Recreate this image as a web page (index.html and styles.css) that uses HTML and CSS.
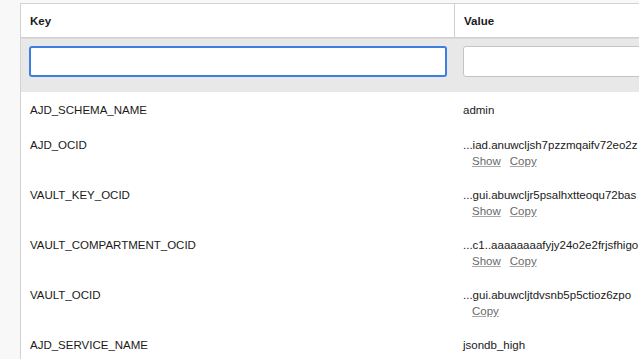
FILE: index.html
```html
<!DOCTYPE html>
<html>
<head>
<meta charset="utf-8">
<link rel="stylesheet" href="styles.css">
</head>
<body>
<div class="table">
  <div class="row head">
    <div class="cell key">Key</div>
    <div class="cell val divider">Value</div>
  </div>
  <div class="row filter">
    <div class="cell key"><input class="inp focus" type="text"></div>
    <div class="cell val"><input class="inp" type="text"></div>
  </div>
  <div class="row">
    <div class="cell key">AJD_SCHEMA_NAME</div>
    <div class="cell val">admin</div>
  </div>
  <div class="row">
    <div class="cell key">AJD_OCID</div>
    <div class="cell val"><div class="text">...iad.anuwcljsh7pzzmqaifv72eo2z</div><div class="links"><a href="#">Show</a><a href="#">Copy</a></div></div>
  </div>
  <div class="row">
    <div class="cell key">VAULT_KEY_OCID</div>
    <div class="cell val"><div class="text">...gui.abuwcljr5psalhxtteoqu72bas</div><div class="links"><a href="#">Show</a><a href="#">Copy</a></div></div>
  </div>
  <div class="row">
    <div class="cell key">VAULT_COMPARTMENT_OCID</div>
    <div class="cell val"><div class="text">...c1..aaaaaaaafyjy24o2e2frjsfhigo</div><div class="links"><a href="#">Show</a><a href="#">Copy</a></div></div>
  </div>
  <div class="row">
    <div class="cell key">VAULT_OCID</div>
    <div class="cell val"><div class="text">...gui.abuwcljtdvsnb5p5ctioz6zpo</div><div class="links"><a href="#">Copy</a></div></div>
  </div>
  <div class="row">
    <div class="cell key">AJD_SERVICE_NAME</div>
    <div class="cell val">jsondb_high</div>
  </div>
</div>
</body>
</html>
```
FILE: styles.css
```css
html, body {
  margin: 0;
  padding: 0;
  background: #f8f8f8;
  overflow: hidden;
}
body {
  font-family: "Liberation Sans", Arial, sans-serif;
  font-size: 11.5px;
  color: #1a1a1a;
  padding: 3px 0 0 20px;
}
.table {
  background: #ffffff;
  border-left: 1px solid #d2d2d2;
  border-top: 1px solid #d2d2d2;
  width: 700px;
}
.row {
  display: grid;
  grid-template-columns: 433px 1fr;
}
.cell {
  padding: 10px 9px;
  line-height: 16px;
  white-space: nowrap;
  overflow: hidden;
}
.head {
  border-bottom: 1px solid #cfcfcf;
}
.head .cell {
  font-weight: bold;
  padding: 9px 9px 8px;
}
.head .divider {
  border-left: 1px solid #cfcfcf;
}
.filter {
  background: #e8e8e8;
  border-top: 1px solid #dcdcdc;
}
.filter .cell {
  padding: 7px 8px 15px;
  line-height: 0;
}
.filter .val {
  padding-left: 9px;
}
.inp {
  box-sizing: border-box;
  width: 100%;
  height: 31px;
  margin: 0;
  border: 1px solid #c4c4c4;
  border-radius: 3px;
  background: #fff;
  font: inherit;
  outline: none;
}
.filter .key .inp {
  width: 418px;
}
.inp.focus {
  border: 2px solid #3b7fe0;
}
.row:nth-child(4) {
  margin-top: -1px;
}
.links {
  padding-left: 9px;
  line-height: 14px;
  margin-top: 1px;
  margin-bottom: -1px;
}
.links a {
  color: #6a6a6a;
  text-decoration: underline;
  text-decoration-color: #a8a8a8;
  margin-right: 9px;
}
```
